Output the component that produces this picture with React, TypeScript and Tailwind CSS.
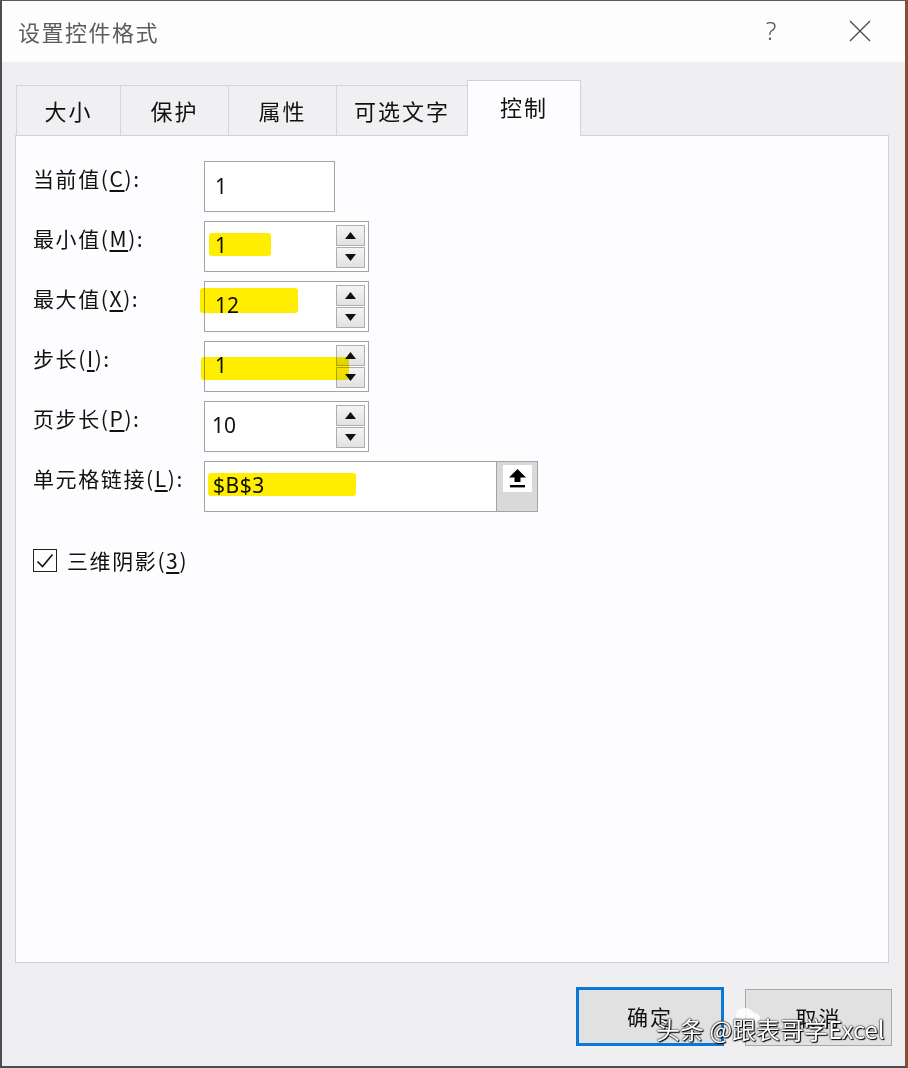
import React from "react";

const cjk = '"Noto Sans CJK SC", "Noto Sans", sans-serif';
const num = '"Noto Sans", "Noto Sans CJK SC", sans-serif';

type Tab = { name: string; w: string; active?: boolean };

const tabs: Tab[] = [
  { name: "大小", w: "w-[104px]" },
  { name: "保护", w: "w-[108px]" },
  { name: "属性", w: "w-[108px]" },
  { name: "可选文字", w: "w-[131px]" },
  { name: "控制", w: "w-[114px]", active: true },
];

function Label({ text, keyChar }: { text: string; keyChar: string }) {
  return (
    <div
      className="w-[171px] shrink-0 pt-[3px] text-[21px] leading-[28px] tracking-[1.6px] text-[#111] whitespace-nowrap"
      style={{ fontFamily: cjk }}
    >
      {text}(<span className="underline underline-offset-[3px]">{keyChar}</span>):
    </div>
  );
}

function Spin() {
  return (
    <div className="flex flex-col gap-[1px] pr-[3px] pt-[3px]">
      {["up", "down"].map((d) => (
        <div
          key={d}
          className="w-[29px] h-[21px] border border-[#adadad] bg-gradient-to-b from-[#f4f4f4] to-[#e2e2e2] flex items-center justify-center"
        >
          <svg width="11" height="7" viewBox="0 0 11 7">
            {d === "up" ? (
              <path d="M5.5 0 L11 7 L0 7 Z" fill="#111" />
            ) : (
              <path d="M0 0 L11 0 L5.5 7 Z" fill="#111" />
            )}
          </svg>
        </div>
      ))}
    </div>
  );
}

function Mark({ pos }: { pos: string }) {
  return (
    <div
      className={`absolute ${pos} bg-[#ffee00] mix-blend-multiply rounded-[3px] blur-[0.6px] z-10`}
    />
  );
}

export default function App() {
  return (
    <div className="w-[908px] h-[1068px] bg-[#efeef1] border-l-2 border-t border-b-2 border-r-[3px] border-l-[#4d4d4d] border-t-[#5a5a5a] border-b-[#4d4d4d] border-r-[#8d4a38] flex flex-col relative overflow-hidden">
      {/* title bar */}
      <div className="h-[61px] bg-[#fdfdfe] flex items-center pl-[16px] shrink-0">
        <div
          className="text-[22px] tracking-[1.5px] text-[#5c5c5c]"
          style={{ fontFamily: cjk }}
        >
          设置控件格式
        </div>
        <div
          className="ml-auto w-[24px] text-center text-[25px] leading-none text-[#555] mr-[66px] -mt-[2px]"
          style={{ fontFamily: num, fontWeight: 300 }}
        >
          ?
        </div>
        <svg width="22" height="22" viewBox="0 0 22 22" className="mr-[34px] -mt-[2px]">
          <path d="M1 1 L21 21 M21 1 L1 21" stroke="#4a4a4a" strokeWidth="1.3" />
        </svg>
      </div>

      {/* tabs */}
      <div className="flex items-end h-[55px] mt-[18px] ml-[14px] shrink-0">
        {tabs.map((t) => (
          <div
            key={t.name}
            className={
              t.active
                ? `${t.w} h-[56px] -mb-px relative z-10 bg-[#fdfcfe] border border-b-0 border-[#d2d2d4] flex items-center justify-center text-[22px] tracking-[2px] text-[#111] pb-[4px]`
                : `${t.w} h-[50px] bg-[#f0eff1] border-t border-l border-[#d6d6d8] flex items-center justify-center text-[22px] tracking-[2px] text-[#111]`
            }
            style={{ fontFamily: cjk }}
          >
            {t.name}
          </div>
        ))}
      </div>

      {/* panel */}
      <div className="ml-[13px] w-[874px] h-[828px] border border-[#d2d2d4] bg-[#fdfcfe] pt-[25px] pl-[17px] shrink-0">
        <div className="flex flex-col gap-[9px]">
          <div className="flex items-start">
            <Label text="当前值" keyChar="C" />
            <div className="w-[131px] h-[51px] border border-[#a3a3a3] bg-white flex items-center pl-[10px]">
              <span className="text-[21px] text-[#111]" style={{ fontFamily: num }}>1</span>
            </div>
          </div>

          <div className="flex items-start">
            <Label text="最小值" keyChar="M" />
            <div className="relative w-[165px] h-[51px] border border-[#a3a3a3] bg-white flex items-start">
              <Mark pos="left-[4px] top-[11px] w-[62px] h-[23px]" />
              <span className="flex-1 pl-[10px] pt-[8px] text-[21px] text-[#111]" style={{ fontFamily: num }}>1</span>
              <Spin />
            </div>
          </div>

          <div className="flex items-start">
            <Label text="最大值" keyChar="X" />
            <div className="relative w-[165px] h-[51px] border border-[#a3a3a3] bg-white flex items-start">
              <Mark pos="-left-[5px] top-[6px] w-[98px] h-[25px]" />
              <span className="flex-1 pl-[10px] pt-[8px] text-[21px] text-[#111]" style={{ fontFamily: num }}>12</span>
              <Spin />
            </div>
          </div>

          <div className="flex items-start">
            <Label text="步长" keyChar="I" />
            <div className="relative w-[165px] h-[51px] border border-[#a3a3a3] bg-white flex items-start">
              <Mark pos="-left-[4px] top-[15px] w-[148px] h-[23px]" />
              <span className="flex-1 pl-[10px] pt-[8px] text-[21px] text-[#111]" style={{ fontFamily: num }}>1</span>
              <Spin />
            </div>
          </div>

          <div className="flex items-start">
            <Label text="页步长" keyChar="P" />
            <div className="relative w-[165px] h-[51px] border border-[#a3a3a3] bg-white flex items-start">
              <span className="flex-1 pl-[7px] pt-[8px] text-[21px] text-[#111]" style={{ fontFamily: num }}>10</span>
              <Spin />
            </div>
          </div>

          <div className="flex items-start">
            <Label text="单元格链接" keyChar="L" />
            <div className="relative w-[334px] h-[51px] border border-[#a3a3a3] bg-white flex">
              <Mark pos="left-[3px] top-[11px] w-[148px] h-[23px]" />
              <span className="flex-1 pl-[8px] pt-[8px] text-[21px] tracking-[0.5px] text-[#111]" style={{ fontFamily: num }}>
                $B$3
              </span>
              <div className="w-[41px] h-full border-l border-[#a3a3a3] bg-[#d9d9d9] flex items-start justify-center pt-[3px]">
                <div className="w-[29px] h-[27px] bg-white flex items-center justify-center">
                  <svg width="17" height="19" viewBox="0 0 17 19">
                    <path d="M8.5 0 L17 8.5 L11.5 8.5 L11.5 13 L5.5 13 L5.5 8.5 L0 8.5 Z" fill="#000" />
                    <rect x="1" y="16" width="15" height="2.4" fill="#000" />
                  </svg>
                </div>
              </div>
            </div>
          </div>
        </div>

        {/* checkbox */}
        <div className="flex items-center mt-[33px] gap-[10px]">
          <div className="w-[24px] h-[23px] border-[1.5px] border-[#222] bg-white flex items-center justify-center">
            <svg width="18" height="16" viewBox="0 0 18 16">
              <path d="M1.5 8.5 L6.5 13.5 L16.5 1.5" stroke="#111" strokeWidth="1.6" fill="none" />
            </svg>
          </div>
          <div className="text-[21px] tracking-[1.6px] text-[#111]" style={{ fontFamily: cjk }}>
            三维阴影(<span className="underline underline-offset-[3px]">3</span>)
          </div>
        </div>
      </div>

      {/* footer */}
      <div className="flex justify-end items-start gap-[21px] pt-[24px] pr-[13px]">
        <div
          className="w-[148px] h-[59px] border-[3px] border-[#0a78d4] bg-[#e1e1e1] flex items-center justify-center text-[21px] text-[#111] tracking-[2px]"
          style={{ fontFamily: cjk }}
        >
          确定
        </div>
        <div
          className="w-[147px] h-[57px] mt-[2px] border border-[#a8a8a8] bg-[#e1e1e1] flex items-center justify-center text-[21px] text-[#111] tracking-[2px]"
          style={{ fontFamily: cjk }}
        >
          取消
        </div>
      </div>

      {/* watermark */}
      <div className="absolute left-[733px] top-[1006px]">
        <svg width="26" height="18" viewBox="0 0 26 18">
          <ellipse cx="10" cy="8" rx="9" ry="7" fill="#fff" opacity="0.85" />
          <ellipse cx="18" cy="11" rx="7" ry="5.5" fill="#fff" opacity="0.85" />
        </svg>
      </div>
      <div
        className="absolute left-[654px] top-[1013px] text-[24px] leading-[30px] text-white whitespace-nowrap [text-shadow:0_0_1px_#000,0_0_2px_#000,1px_1px_1px_#000]"
        style={{ fontFamily: cjk }}
      >
        头条 @跟表哥学Excel
      </div>
    </div>
  );
}
